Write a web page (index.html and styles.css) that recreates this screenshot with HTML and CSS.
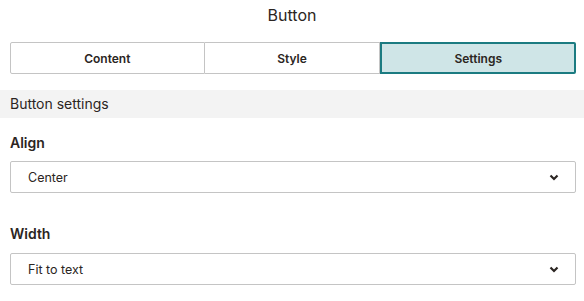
FILE: index.html
```html
<!DOCTYPE html>
<html lang="en">
<head>
  <meta charset="UTF-8">
  <meta name="viewport" content="width=device-width, initial-scale=1.0">
  <title>Button settings</title>
  <link rel="stylesheet" href="styles.css">
</head>
<body>
  <div class="panel">
    <h1 class="panel-title">Button</h1>

    <div class="tabs">
      <button class="tab tab-content">Content</button>
      <button class="tab tab-style">Style</button>
      <button class="tab tab-settings active">Settings</button>
    </div>

    <div class="section-header">Button settings</div>

    <div class="field">
      <label for="align">Align</label>
      <div class="select">
        <span>Center</span>
        <svg width="10" height="7" viewBox="0 0 10 7"><path d="M1.5 1.5 L5 5 L8.5 1.5" fill="none" stroke="#2b2522" stroke-width="2.2"/></svg>
      </div>
    </div>

    <div class="field">
      <label for="width">Width</label>
      <div class="select">
        <span>Fit to text</span>
        <svg width="10" height="7" viewBox="0 0 10 7"><path d="M1.5 1.5 L5 5 L8.5 1.5" fill="none" stroke="#2b2522" stroke-width="2.2"/></svg>
      </div>
    </div>
  </div>
</body>
</html>
```

FILE: styles.css
```css
:root {
  --text: #2b2522;
  --border: #c4c4c4;
  --teal: #1b7b81;
  --teal-light: #cfe5e7;
  --band: #f3f3f3;
}

* {
  margin: 0;
  padding: 0;
  box-sizing: border-box;
}

body {
  font-family: Inter, "Noto Sans", sans-serif;
  color: var(--text);
  background: white;
}

.panel-title {
  font-size: 16px;
  font-weight: 400;
  line-height: 30px;
  text-align: center;
}

.tabs {
  display: flex;
  margin: 12px 8px 0 10px;
}

.tab {
  flex-basis: 0;
  height: 32px;
  font-family: inherit;
  font-size: 12px;
  font-weight: 600;
  color: var(--text);
  background: white;
  border: 1px solid var(--border);
  border-left: none;
}

.tab-content {
  flex-grow: 195;
  border-left: 1px solid var(--border);
  border-radius: 2px 0 0 2px;
}

.tab-style {
  flex-grow: 177;
}

.tab-settings {
  flex-grow: 194;
}

.tab.active {
  background: var(--teal-light);
  border: 2px solid var(--teal);
  border-radius: 0 2px 2px 0;
}

.section-header {
  margin-top: 16px;
  height: 28px;
  line-height: 28px;
  padding-left: 10px;
  font-size: 14px;
  background: var(--band);
}

.field {
  padding: 0 8px 0 10px;
  margin-top: 15px;
}

.field + .field {
  margin-top: 31px;
}

.field label {
  display: block;
  font-size: 14px;
  font-weight: 600;
  line-height: 20px;
  margin-bottom: 8px;
}

.field + .field label {
  margin-bottom: 9px;
}

.select {
  height: 32px;
  display: flex;
  align-items: center;
  justify-content: space-between;
  padding: 0 16px 0 17px;
  font-size: 12.5px;
  border: 1px solid var(--border);
  border-radius: 2px;
}
```
